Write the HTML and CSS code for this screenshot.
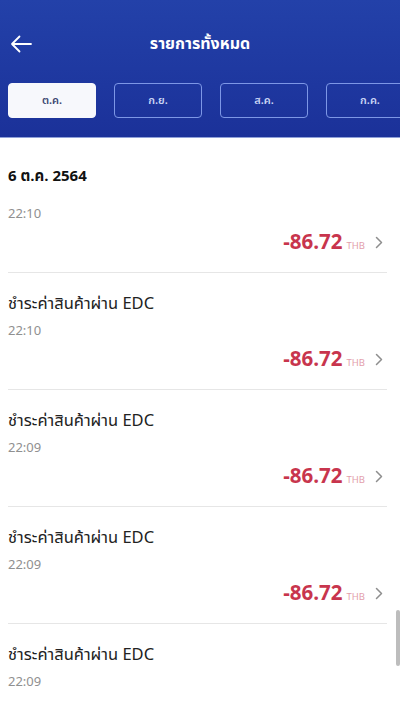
FILE: index.html
```html
<!DOCTYPE html>
<html lang="th">

<head>
    <meta charset="utf-8">
    <meta name="viewport" content="width=device-width, initial-scale=1.0">
    <title>รายการทั้งหมด</title>
    <link rel="stylesheet" href="styles.css">
</head>

<body>
    <header>
        <div class="topbar">
            <svg class="back" width="22" height="18" viewBox="0 0 22 18">
                <path d="M21 9H2M9.5 1.5L2 9l7.5 7.5" fill="none" stroke="#fff" stroke-width="1.8" stroke-linecap="round" stroke-linejoin="round" />
            </svg>
            <h1>รายการทั้งหมด</h1>
        </div>
        <nav>
            <button class="valgt">ต.ค.</button>
            <button>ก.ย.</button>
            <button>ส.ค.</button>
            <button>ก.ค.</button>
        </nav>
    </header>

    <main>
        <h2 class="dato">6 ต.ค. 2564</h2>

        <article class="ret forste">
            <p class="tid">22:10</p>
            <p class="pris"><b>-86.72</b><span class="thb">THB</span>
                <svg class="pil" width="8" height="13" viewBox="0 0 8 13"><path d="M1.5 1.5l5 5-5 5" fill="none" stroke="#8e8e8e" stroke-width="1.5" stroke-linecap="round" stroke-linejoin="round" /></svg>
            </p>
        </article>

        <article class="ret">
            <h3>ชำระค่าสินค้าผ่าน EDC</h3>
            <p class="tid">22:10</p>
            <p class="pris"><b>-86.72</b><span class="thb">THB</span>
                <svg class="pil" width="8" height="13" viewBox="0 0 8 13"><path d="M1.5 1.5l5 5-5 5" fill="none" stroke="#8e8e8e" stroke-width="1.5" stroke-linecap="round" stroke-linejoin="round" /></svg>
            </p>
        </article>

        <article class="ret">
            <h3>ชำระค่าสินค้าผ่าน EDC</h3>
            <p class="tid">22:09</p>
            <p class="pris"><b>-86.72</b><span class="thb">THB</span>
                <svg class="pil" width="8" height="13" viewBox="0 0 8 13"><path d="M1.5 1.5l5 5-5 5" fill="none" stroke="#8e8e8e" stroke-width="1.5" stroke-linecap="round" stroke-linejoin="round" /></svg>
            </p>
        </article>

        <article class="ret">
            <h3>ชำระค่าสินค้าผ่าน EDC</h3>
            <p class="tid">22:09</p>
            <p class="pris"><b>-86.72</b><span class="thb">THB</span>
                <svg class="pil" width="8" height="13" viewBox="0 0 8 13"><path d="M1.5 1.5l5 5-5 5" fill="none" stroke="#8e8e8e" stroke-width="1.5" stroke-linecap="round" stroke-linejoin="round" /></svg>
            </p>
        </article>

        <article class="ret">
            <h3>ชำระค่าสินค้าผ่าน EDC</h3>
            <p class="tid">22:09</p>
        </article>
    </main>

    <div class="scrollbar"></div>
</body></html>
```

FILE: styles.css
```css
body {
    margin: 0;
    width: 400px;
    height: 701px;
    overflow: hidden;
    background-color: #fff;
    font-family: "Noto Sans Thai", "Noto Sans", "Liberation Sans", sans-serif;
    position: relative;
}

header {
    height: 138px;
    background: linear-gradient(#2341a9, #1b3199);
    border-bottom: 1px solid #8fa0d8;
    box-sizing: border-box;
}

.topbar {
    display: flex;
    align-items: center;
    justify-content: center;
    height: 88px;
    position: relative;
}

.back {
    position: absolute;
    left: 10px;
    top: 35px;
}

h1 {
    margin: 0;
    color: #fff;
    font-size: 16px;
    font-weight: 700;
}

nav {
    display: flex;
    gap: 18px;
    padding-left: 8px;
    margin-top: -5px;
}

nav button {
    flex: 0 0 88px;
    height: 35px;
    border: 1.5px solid #7d97e6;
    border-radius: 4px;
    background: transparent;
    color: #c9d4f4;
    font-family: inherit;
    font-size: 11px;
    font-weight: 600;
}

nav button.valgt {
    background-color: #f7f8fc;
    border-color: #f7f8fc;
    color: #3c4872;
}

main {
    padding: 0 13px 0 8px;
}

.dato {
    margin: 29px 0 0;
    font-size: 15px;
    line-height: 20px;
    font-weight: 700;
    color: #111;
}

.ret {
    border-bottom: 1px solid #e6e6e6;
    padding: 21px 0 17px;
}

.ret.forste {
    padding-top: 19px;
}

h3 {
    margin: 0 0 9px;
    font-size: 16.5px;
    line-height: 20px;
    font-weight: 400;
    color: #222;
}

.tid {
    margin: 0;
    font-size: 13px;
    line-height: 16px;
    color: #909090;
}

.pris {
    display: flex;
    justify-content: flex-end;
    align-items: baseline;
    margin: 9px 0 0;
    height: 24px;
    line-height: 24px;
    color: #c8354d;
}

.pris b {
    font-size: 20.5px;
}

.thb {
    font-size: 9.5px;
    color: #e3a0ac;
    margin-left: 4px;
}

.pil {
    margin-left: 10px;
    margin-right: 4px;
}

.scrollbar {
    position: absolute;
    right: 0;
    top: 610px;
    width: 4px;
    height: 56px;
    background-color: #bdbdbd;
    border-radius: 2px;
}
```
